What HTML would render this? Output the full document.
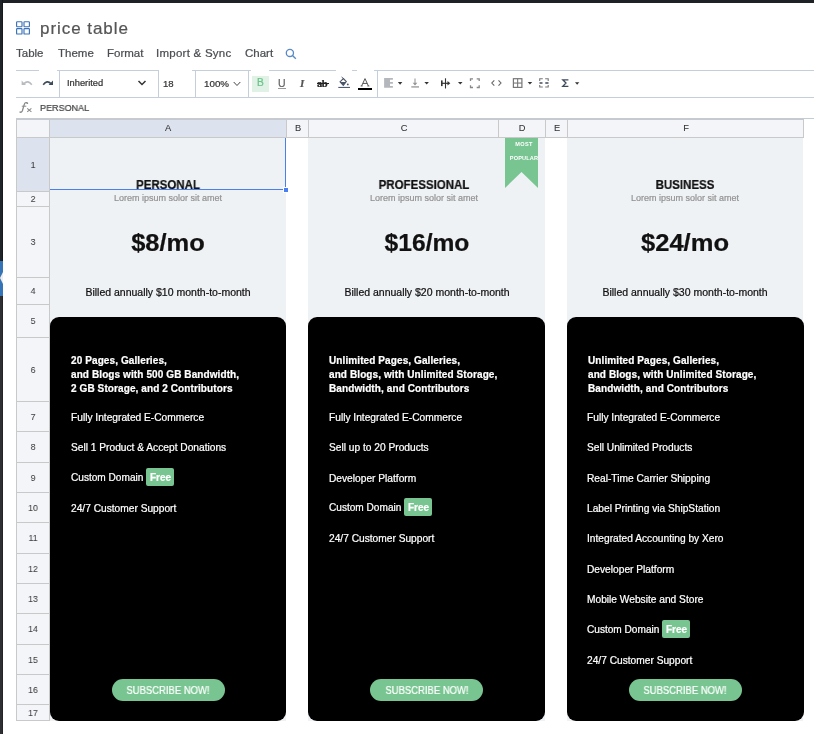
<!DOCTYPE html>
<html><head><meta charset="utf-8"><style>
*{box-sizing:border-box}
html,body{margin:0;padding:0}
body{width:814px;height:734px;overflow:hidden;background:#fff;position:relative;font-family:"Liberation Sans",sans-serif}
.a{position:absolute}
.t{position:absolute;white-space:nowrap;line-height:1;will-change:transform;-webkit-text-stroke:0.22px currentColor}
.card{position:absolute;background:#000;border-radius:9px}
.btn{position:absolute;background:#78c591;border-radius:11px}
</style></head><body>
<div class="a" style="left:0px;top:0px;width:814px;height:3px;background:#1e2226;"></div>
<div class="a" style="left:0px;top:0px;width:3px;height:261px;background:#1f2428;"></div>
<div class="a" style="left:0px;top:296px;width:3px;height:438px;background:#2d2f32;"></div>
<div class="a" style="left:2px;top:0px;width:1px;height:261px;background:#15191c;"></div>
<div class="a" style="left:2px;top:296px;width:1px;height:438px;background:#222426;"></div>
<div class="a" style="left:0px;top:261px;width:3px;height:35px;background:#3474b7;"></div>
<svg class="a" style="left:0;top:271px" width="3" height="14" viewBox="0 0 3 14"><path d="M3 1 L0 7 L3 13 Z" fill="#eee"/></svg>
<svg class="a" style="left:15px;top:20px" width="16" height="16" viewBox="0 0 16 16">
<rect x="1.6" y="1.7" width="5.4" height="5" rx="0.6" fill="none" stroke="#3a72b8" stroke-width="1.15"/>
<rect x="9" y="1.7" width="5.4" height="5" rx="0.6" fill="none" stroke="#3a72b8" stroke-width="1.15"/>
<rect x="1.6" y="8.6" width="5.4" height="5.4" rx="0.6" fill="none" stroke="#3a72b8" stroke-width="1.15"/>
<rect x="9" y="8.6" width="5.4" height="5.4" rx="0.6" fill="none" stroke="#3a72b8" stroke-width="1.15"/>
</svg>
<div class="t" style="left:40.30px;top:20.21px;font-size:17px;color:#555;font-weight:400;letter-spacing:0.95px">price table</div>
<div class="t" style="left:16.00px;top:47.87px;font-size:11.5px;color:#4a4d52;font-weight:400;letter-spacing:0px">Table</div>
<div class="t" style="left:58.00px;top:47.87px;font-size:11.5px;color:#4a4d52;font-weight:400;letter-spacing:0px">Theme</div>
<div class="t" style="left:106.50px;top:47.87px;font-size:11.5px;color:#4a4d52;font-weight:400;letter-spacing:0px">Format</div>
<div class="t" style="left:155.80px;top:47.87px;font-size:11.5px;color:#4a4d52;font-weight:400;letter-spacing:0.25px">Import &amp; Sync</div>
<div class="t" style="left:244.50px;top:47.87px;font-size:11.5px;color:#4a4d52;font-weight:400;letter-spacing:0px">Chart</div>
<svg class="a" style="left:285px;top:47.5px" width="12" height="12" viewBox="0 0 12 12"><circle cx="4.9" cy="4.9" r="3.6" fill="none" stroke="#5a8ac6" stroke-width="1.3"/><line x1="7.5" y1="7.5" x2="10.8" y2="10.8" stroke="#5a8ac6" stroke-width="1.4"/></svg>
<div class="a" style="left:16px;top:70px;width:23px;height:1px;background:#c5cfdc;"></div>
<div class="a" style="left:57px;top:70px;width:102px;height:1px;background:#c5cfdc;"></div>
<div class="a" style="left:192px;top:70px;width:59px;height:1px;background:#c5cfdc;"></div>
<div class="a" style="left:269px;top:70px;width:67px;height:1px;background:#c5cfdc;"></div>
<div class="a" style="left:352px;top:70px;width:5px;height:1px;background:#c5cfdc;"></div>
<div class="a" style="left:374px;top:70px;width:440px;height:1px;background:#c5cfdc;"></div>
<div class="a" style="left:16px;top:97px;width:798px;height:1px;background:#c5cfdc;"></div>
<div class="a" style="left:59px;top:70px;width:1px;height:28px;background:#c5cfdc;"></div>
<div class="a" style="left:158px;top:70px;width:1px;height:28px;background:#c5cfdc;"></div>
<div class="a" style="left:195px;top:70px;width:1px;height:28px;background:#c5cfdc;"></div>
<div class="a" style="left:248px;top:70px;width:1px;height:28px;background:#c5cfdc;"></div>
<div class="a" style="left:377px;top:70px;width:1px;height:28px;background:#c5cfdc;"></div>
<div class="t" style="left:67.00px;top:79.23px;font-size:9.3px;color:#333;font-weight:400;">Inherited</div>
<svg class="a" style="left:137px;top:79px" width="10" height="8" viewBox="0 0 10 8"><path d="M1.5 2 L5 5.5 L8.5 2" fill="none" stroke="#333" stroke-width="1.5"/></svg>
<div class="t" style="left:162.70px;top:79.47px;font-size:9.6px;color:#333;font-weight:400;">18</div>
<div class="t" style="left:204.00px;top:79.30px;font-size:9.8px;color:#333;font-weight:400;">100%</div>
<svg class="a" style="left:233px;top:81px" width="8" height="6" viewBox="0 0 8 6"><path d="M0.7 1 L4 4.5 L7.3 1" fill="none" stroke="#444" stroke-width="1"/></svg>
<svg class="a" style="left:20px;top:78px" width="14" height="10" viewBox="0 0 14 10"><path d="M4 5.6 Q8 1.6 11.8 6.8" fill="none" stroke="#b8bcc2" stroke-width="1.6"/><path d="M1.6 2.6 V7 H6 Z" fill="#b8bcc2"/></svg>
<svg class="a" style="left:42px;top:78px" width="14" height="10" viewBox="0 0 14 10"><path d="M1.2 6.8 Q5 1.6 9 5.6" fill="none" stroke="#3d4a5a" stroke-width="1.6"/><path d="M11 2.6 V7 H6.6 Z" fill="#3d4a5a"/></svg>
<div class="a" style="left:251.5px;top:75.5px;width:17.5px;height:16px;background:#dff2e5;"></div>
<div class="t" style="left:256.80px;top:78.17px;font-size:10.2px;color:#6cc38a;font-weight:400;">B</div>
<div class="t" style="left:277.50px;top:78.11px;font-size:10.5px;color:#666;font-weight:400;">U</div>
<div class="a" style="left:277.5px;top:88px;width:8px;height:1px;background:#999;"></div>
<div class="t" style="left:299.50px;top:78.09px;font-size:11px;color:#555;font-weight:700;font-style:italic;font-family:'Liberation Serif'">I</div>
<div class="t" style="left:317.00px;top:78.91px;font-size:10.5px;color:#222;font-weight:700;font-family:'Liberation Serif';letter-spacing:-0.5px">ab</div>
<div class="a" style="left:316.5px;top:83.3px;width:12px;height:0.9px;background:#222;"></div>
<svg class="a" style="left:337px;top:76px" width="14" height="14" viewBox="0 0 14 14"><path d="M3 5.8 L6.4 2.5 L9.3 5.6 L6.3 9.4 Z" fill="none" stroke="#4a5568" stroke-width="1.1"/><path d="M3.2 6 H9.1 L6.3 9.3 Z" fill="#4a5568"/><path d="M4.6 1 L6.4 2.6" stroke="#4a5568" stroke-width="1"/><circle cx="10.8" cy="8.4" r="0.95" fill="#4a5568"/><rect x="1.3" y="10.9" width="11.7" height="1.1" fill="#4d5b6e"/></svg>
<svg class="a" style="left:358px;top:76px" width="14" height="12" viewBox="0 0 14 12"><path d="M3.6 10 L7 2.6 L10.4 10 M4.9 7.4 H9.1" fill="none" stroke="#444" stroke-width="0.9"/><path d="M2.6 10 H4.6 M9.4 10 H11.4" stroke="#444" stroke-width="0.8"/></svg>
<div class="a" style="left:358px;top:88px;width:14px;height:2px;background:#000;"></div>
<svg class="a" style="left:382px;top:76px" width="200" height="14" viewBox="0 0 200 14"><path d="M2.1 1.9 H10.9 V3.7 H8 V5.9 H10.9 V7.8 H8 V10 H10.9 V11.8 H2.1 Z" fill="#b4b8bd"/><path d="M15.9 5.9 H20.3 L18.1 8.7Z" fill="#333"/><line x1="33" y1="2.5" x2="33" y2="9" stroke="#999" stroke-width="1.1"/><path d="M30.6 6.8 H35.4 L33 9.6 Z" fill="#999"/><rect x="29.3" y="10.1" width="7.7" height="1.6" fill="#aaa"/><path d="M42.4 6 H46.9 L44.65 8.5Z" fill="#333"/><rect x="59" y="4.4" width="1.6" height="5.7" fill="#333"/><line x1="63.5" y1="2.3" x2="63.5" y2="12.5" stroke="#333" stroke-width="1.1"/><path d="M59.5 7.3 H66" stroke="#333" stroke-width="1.2"/><path d="M65.5 5 L68.3 7.3 L65.5 9.6Z" fill="#333"/><path d="M76 6 H80.5 L78.25 8.5Z" fill="#333"/><path d="M88.5 5 V2.8 H91 M94.7 2.8 H97.2 V5 M97.2 9.3 V11.5 H94.7 M91 11.5 H88.5 V9.3" fill="none" stroke="#888" stroke-width="1.3"/><path d="M112.3 4.3 L109.8 7 L112.3 9.7 M116.5 4.3 L119 7 L116.5 9.7" fill="none" stroke="#666" stroke-width="1.1"/><rect x="131.4" y="2.7" width="8.5" height="8.7" fill="none" stroke="#777" stroke-width="1.2"/><line x1="135.65" y1="2.7" x2="135.65" y2="11.4" stroke="#777" stroke-width="1.1"/><line x1="131.4" y1="7.05" x2="139.9" y2="7.05" stroke="#777" stroke-width="1.1"/><path d="M145.7 6 H150.2 L147.95 8.5Z" fill="#333"/><path d="M157.7 5 V2.8 H160.8 M163.2 2.8 H166.2 V5 M157.7 9 V11 H160.8 M163.2 11 H166.2 V9" fill="none" stroke="#777" stroke-width="1.1"/><path d="M157.5 7 H160.5 M163.3 7 H166.5" stroke="#3d4a5c" stroke-width="1.5"/><path d="M186.4 3.8 H180.8 L184 7 L180.8 10.3 H186.4" fill="none" stroke="#3d4a5c" stroke-width="1.3"/><path d="M193 6.3 H197.3 L195.15 8.7Z" fill="#333"/></svg>
<svg class="a" style="left:18px;top:101px" width="16" height="13" viewBox="0 0 16 13"><path d="M1.6 10.6 C2.4 11.6 3.6 11.5 4.3 10 L6.3 3.4 C6.8 1.8 7.8 1.3 9 1.7" fill="none" stroke="#8a8a8a" stroke-width="1.3"/><circle cx="9.3" cy="2.2" r="0.9" fill="#8a8a8a"/><path d="M3.8 5.2 H8.3" stroke="#8a8a8a" stroke-width="1"/><path d="M9.2 7.4 L13.4 10.9 M13.4 7.4 L9.2 10.9" stroke="#8a8a8a" stroke-width="1.1"/></svg>
<div class="t" style="left:39.50px;top:103.37px;font-size:9.6px;color:#444;font-weight:400;transform:scaleX(0.94);transform-origin:0 0">PERSONAL</div>
<div class="a" style="left:16px;top:118px;width:798px;height:1px;background:#c3cbd6;"></div>
<div class="a" style="left:16px;top:119px;width:788px;height:1px;background:#c9c9c9;"></div>
<div class="a" style="left:17px;top:120px;width:786px;height:17px;background:#f4f5f9;"></div>
<div class="a" style="left:50px;top:120px;width:236px;height:17px;background:#dce3ef;"></div>
<div class="a" style="left:17px;top:138px;width:32px;height:582px;background:#f4f5f9;"></div>
<div class="a" style="left:17px;top:138px;width:32px;height:53px;background:#dce3ef;"></div>
<div class="a" style="left:49px;top:119px;width:1px;height:19px;background:#c9c9c9;"></div>
<div class="a" style="left:286px;top:119px;width:1px;height:19px;background:#c9c9c9;"></div>
<div class="a" style="left:308px;top:119px;width:1px;height:19px;background:#c9c9c9;"></div>
<div class="a" style="left:498px;top:119px;width:1px;height:19px;background:#c9c9c9;"></div>
<div class="a" style="left:545px;top:119px;width:1px;height:19px;background:#c9c9c9;"></div>
<div class="a" style="left:567px;top:119px;width:1px;height:19px;background:#c9c9c9;"></div>
<div class="a" style="left:803px;top:119px;width:1px;height:19px;background:#c9c9c9;"></div>
<div class="t" style="left:-32.00px;width:400px;text-align:center;top:124.33px;font-size:9.3px;color:#333;font-weight:400;-webkit-text-stroke:0.08px #333">A</div>
<div class="t" style="left:97.50px;width:400px;text-align:center;top:124.33px;font-size:9.3px;color:#333;font-weight:400;-webkit-text-stroke:0.08px #333">B</div>
<div class="t" style="left:203.50px;width:400px;text-align:center;top:124.33px;font-size:9.3px;color:#333;font-weight:400;-webkit-text-stroke:0.08px #333">C</div>
<div class="t" style="left:322.00px;width:400px;text-align:center;top:124.33px;font-size:9.3px;color:#333;font-weight:400;-webkit-text-stroke:0.08px #333">D</div>
<div class="t" style="left:356.50px;width:400px;text-align:center;top:124.33px;font-size:9.3px;color:#333;font-weight:400;-webkit-text-stroke:0.08px #333">E</div>
<div class="t" style="left:485.50px;width:400px;text-align:center;top:124.33px;font-size:9.3px;color:#333;font-weight:400;-webkit-text-stroke:0.08px #333">F</div>
<div class="a" style="left:16px;top:137px;width:788px;height:1px;background:#c9c9c9;"></div>
<div class="a" style="left:16px;top:119px;width:1px;height:602px;background:#c9c9c9;"></div>
<div class="a" style="left:49px;top:119px;width:1px;height:602px;background:#c9c9c9;"></div>
<div class="a" style="left:16px;top:191px;width:34px;height:1px;background:#c9c9c9;"></div>
<div class="t" style="left:-167.00px;width:400px;text-align:center;top:160.63px;font-size:9.3px;color:#3d3d3d;font-weight:400;transform:scaleX(0.92);-webkit-text-stroke:0.08px #3d3d3d">1</div>
<div class="a" style="left:16px;top:206px;width:34px;height:1px;background:#c9c9c9;"></div>
<div class="t" style="left:-167.00px;width:400px;text-align:center;top:195.13px;font-size:9.3px;color:#3d3d3d;font-weight:400;transform:scaleX(0.92);-webkit-text-stroke:0.08px #3d3d3d">2</div>
<div class="a" style="left:16px;top:277px;width:34px;height:1px;background:#c9c9c9;"></div>
<div class="t" style="left:-167.00px;width:400px;text-align:center;top:238.08px;font-size:9.3px;color:#3d3d3d;font-weight:400;transform:scaleX(0.92);-webkit-text-stroke:0.08px #3d3d3d">3</div>
<div class="a" style="left:16px;top:304px;width:34px;height:1px;background:#c9c9c9;"></div>
<div class="t" style="left:-167.00px;width:400px;text-align:center;top:287.18px;font-size:9.3px;color:#3d3d3d;font-weight:400;transform:scaleX(0.92);-webkit-text-stroke:0.08px #3d3d3d">4</div>
<div class="a" style="left:16px;top:337px;width:34px;height:1px;background:#c9c9c9;"></div>
<div class="t" style="left:-167.00px;width:400px;text-align:center;top:317.28px;font-size:9.3px;color:#3d3d3d;font-weight:400;transform:scaleX(0.92);-webkit-text-stroke:0.08px #3d3d3d">5</div>
<div class="a" style="left:16px;top:401px;width:34px;height:1px;background:#c9c9c9;"></div>
<div class="t" style="left:-167.00px;width:400px;text-align:center;top:365.73px;font-size:9.3px;color:#3d3d3d;font-weight:400;transform:scaleX(0.92);-webkit-text-stroke:0.08px #3d3d3d">6</div>
<div class="a" style="left:16px;top:431px;width:34px;height:1px;background:#c9c9c9;"></div>
<div class="t" style="left:-167.00px;width:400px;text-align:center;top:412.83px;font-size:9.3px;color:#3d3d3d;font-weight:400;transform:scaleX(0.92);-webkit-text-stroke:0.08px #3d3d3d">7</div>
<div class="a" style="left:16px;top:462px;width:34px;height:1px;background:#c9c9c9;"></div>
<div class="t" style="left:-167.00px;width:400px;text-align:center;top:443.38px;font-size:9.3px;color:#3d3d3d;font-weight:400;transform:scaleX(0.92);-webkit-text-stroke:0.08px #3d3d3d">8</div>
<div class="a" style="left:16px;top:492px;width:34px;height:1px;background:#c9c9c9;"></div>
<div class="t" style="left:-167.00px;width:400px;text-align:center;top:473.83px;font-size:9.3px;color:#3d3d3d;font-weight:400;transform:scaleX(0.92);-webkit-text-stroke:0.08px #3d3d3d">9</div>
<div class="a" style="left:16px;top:522px;width:34px;height:1px;background:#c9c9c9;"></div>
<div class="t" style="left:-167.00px;width:400px;text-align:center;top:503.73px;font-size:9.3px;color:#3d3d3d;font-weight:400;transform:scaleX(0.92);-webkit-text-stroke:0.08px #3d3d3d">10</div>
<div class="a" style="left:16px;top:553px;width:34px;height:1px;background:#c9c9c9;"></div>
<div class="t" style="left:-167.00px;width:400px;text-align:center;top:534.28px;font-size:9.3px;color:#3d3d3d;font-weight:400;transform:scaleX(0.92);-webkit-text-stroke:0.08px #3d3d3d">11</div>
<div class="a" style="left:16px;top:583px;width:34px;height:1px;background:#c9c9c9;"></div>
<div class="t" style="left:-167.00px;width:400px;text-align:center;top:564.73px;font-size:9.3px;color:#3d3d3d;font-weight:400;transform:scaleX(0.92);-webkit-text-stroke:0.08px #3d3d3d">12</div>
<div class="a" style="left:16px;top:613px;width:34px;height:1px;background:#c9c9c9;"></div>
<div class="t" style="left:-167.00px;width:400px;text-align:center;top:594.63px;font-size:9.3px;color:#3d3d3d;font-weight:400;transform:scaleX(0.92);-webkit-text-stroke:0.08px #3d3d3d">13</div>
<div class="a" style="left:16px;top:644px;width:34px;height:1px;background:#c9c9c9;"></div>
<div class="t" style="left:-167.00px;width:400px;text-align:center;top:625.28px;font-size:9.3px;color:#3d3d3d;font-weight:400;transform:scaleX(0.92);-webkit-text-stroke:0.08px #3d3d3d">14</div>
<div class="a" style="left:16px;top:674px;width:34px;height:1px;background:#c9c9c9;"></div>
<div class="t" style="left:-167.00px;width:400px;text-align:center;top:655.73px;font-size:9.3px;color:#3d3d3d;font-weight:400;transform:scaleX(0.92);-webkit-text-stroke:0.08px #3d3d3d">15</div>
<div class="a" style="left:16px;top:704px;width:34px;height:1px;background:#c9c9c9;"></div>
<div class="t" style="left:-167.00px;width:400px;text-align:center;top:685.63px;font-size:9.3px;color:#3d3d3d;font-weight:400;transform:scaleX(0.92);-webkit-text-stroke:0.08px #3d3d3d">16</div>
<div class="a" style="left:16px;top:720px;width:34px;height:1px;background:#c9c9c9;"></div>
<div class="t" style="left:-167.00px;width:400px;text-align:center;top:708.68px;font-size:9.3px;color:#3d3d3d;font-weight:400;transform:scaleX(0.92);-webkit-text-stroke:0.08px #3d3d3d">17</div>
<div class="a" style="left:50px;top:138px;width:236px;height:583px;background:#eff2f5;"></div>
<div class="a" style="left:308px;top:138px;width:237px;height:583px;background:#eff2f5;"></div>
<div class="a" style="left:567px;top:138px;width:236px;height:583px;background:#eff2f5;"></div>
<div class="a" style="left:285px;top:138px;width:1px;height:52px;background:#4a7ff0;"></div>
<div class="a" style="left:50px;top:189px;width:235px;height:1px;background:#4a7ff0;"></div>
<div class="a" style="left:284px;top:188px;width:4px;height:4px;background:#4a7ff0;outline:1px solid #fff"></div>
<svg class="a" style="left:505px;top:138px" width="33" height="50" viewBox="0 0 33 50"><path d="M0 0 H33 V50 L16.5 34 L0 50 Z" fill="#78c591"/></svg>
<div class="t" style="left:324.00px;width:400px;text-align:center;top:142.46px;font-size:5.6px;color:#fff;font-weight:700;letter-spacing:0.3px;-webkit-text-stroke:0">MOST</div>
<div class="t" style="left:323.90px;width:400px;text-align:center;top:156.46px;font-size:5.6px;color:#fff;font-weight:700;letter-spacing:0.15px;-webkit-text-stroke:0">POPULAR</div>
<div class="t" style="left:-31.60px;width:400px;text-align:center;top:177.97px;font-size:13.5px;color:#111;font-weight:700;transform:scaleX(0.852);">PERSONAL</div>
<div class="t" style="left:-31.60px;width:400px;text-align:center;top:193.98px;font-size:9px;color:#939393;font-weight:400;">Lorem ipsum solor sit amet</div>
<div class="t" style="left:-31.60px;width:400px;text-align:center;top:231.93px;font-size:23px;color:#111;font-weight:700;transform:scaleX(1.108);">$8/mo</div>
<div class="t" style="left:-31.60px;width:400px;text-align:center;top:286.61px;font-size:10.5px;color:#111;font-weight:400;">Billed annually $10 month-to-month</div>
<div class="card" style="left:50px;top:316.7px;width:236px;height:404px"></div>
<div class="t" style="left:71.00px;top:356.24px;font-size:10px;color:#fff;font-weight:700;letter-spacing:0.1px">20 Pages, Galleries,</div>
<div class="t" style="left:71.00px;top:370.09px;font-size:10px;color:#fff;font-weight:700;letter-spacing:0.1px">and Blogs with 500 GB Bandwidth,</div>
<div class="t" style="left:71.00px;top:383.94px;font-size:10px;color:#fff;font-weight:700;letter-spacing:0.1px">2 GB Storage, and 2 Contributors</div>
<div class="t" style="left:70.50px;top:412.97px;font-size:10.2px;color:#fff;font-weight:400;">Fully Integrated E-Commerce</div>
<div class="t" style="left:70.50px;top:442.97px;font-size:10.2px;color:#fff;font-weight:400;">Sell 1 Product &amp; Accept Donations</div>
<div class="t" style="left:70.50px;top:473.05px;font-size:10.1px;color:#fff;font-weight:400;">Custom Domain</div>
<div class="a" style="left:145.90px;top:468.20px;width:28px;height:18px;background:#78c591;border-radius:2px"></div>
<div class="t" style="left:149.50px;top:473.14px;font-size:10px;color:#fff;font-weight:700;">Free</div>
<div class="t" style="left:70.50px;top:503.97px;font-size:10.2px;color:#fff;font-weight:400;">24/7 Customer Support</div>
<div class="btn" style="left:111.50px;top:679px;width:113px;height:22px"></div>
<div class="t" style="left:-32.00px;width:400px;text-align:center;top:685.43px;font-size:10.6px;color:#fff;font-weight:400;transform:scaleX(0.895);">SUBSCRIBE NOW!</div>
<div class="t" style="left:223.90px;width:400px;text-align:center;top:177.97px;font-size:13.5px;color:#111;font-weight:700;transform:scaleX(0.852);">PROFESSIONAL</div>
<div class="t" style="left:223.90px;width:400px;text-align:center;top:193.98px;font-size:9px;color:#939393;font-weight:400;">Lorem ipsum solor sit amet</div>
<div class="t" style="left:226.90px;width:400px;text-align:center;top:231.93px;font-size:23px;color:#111;font-weight:700;transform:scaleX(1.07);">$16/mo</div>
<div class="t" style="left:226.90px;width:400px;text-align:center;top:286.61px;font-size:10.5px;color:#111;font-weight:400;">Billed annually $20 month-to-month</div>
<div class="card" style="left:308px;top:316.7px;width:237px;height:404px"></div>
<div class="t" style="left:329.10px;top:356.24px;font-size:10px;color:#fff;font-weight:700;letter-spacing:0.1px">Unlimited Pages, Galleries,</div>
<div class="t" style="left:329.10px;top:370.09px;font-size:10px;color:#fff;font-weight:700;letter-spacing:0.1px">and Blogs, with Unlimited Storage,</div>
<div class="t" style="left:329.10px;top:383.94px;font-size:10px;color:#fff;font-weight:700;letter-spacing:0.1px">Bandwidth, and Contributors</div>
<div class="t" style="left:328.60px;top:412.97px;font-size:10.2px;color:#fff;font-weight:400;">Fully Integrated E-Commerce</div>
<div class="t" style="left:328.60px;top:442.97px;font-size:10.2px;color:#fff;font-weight:400;">Sell up to 20 Products</div>
<div class="t" style="left:328.60px;top:473.97px;font-size:10.2px;color:#fff;font-weight:400;">Developer Platform</div>
<div class="t" style="left:328.60px;top:502.85px;font-size:10.1px;color:#fff;font-weight:400;">Custom Domain</div>
<div class="a" style="left:404.00px;top:498.00px;width:28px;height:18px;background:#78c591;border-radius:2px"></div>
<div class="t" style="left:407.60px;top:502.94px;font-size:10px;color:#fff;font-weight:700;">Free</div>
<div class="t" style="left:328.60px;top:533.67px;font-size:10.2px;color:#fff;font-weight:400;">24/7 Customer Support</div>
<div class="btn" style="left:370.00px;top:679px;width:113px;height:22px"></div>
<div class="t" style="left:226.50px;width:400px;text-align:center;top:685.43px;font-size:10.6px;color:#fff;font-weight:400;transform:scaleX(0.895);">SUBSCRIBE NOW!</div>
<div class="t" style="left:485.30px;width:400px;text-align:center;top:177.97px;font-size:13.5px;color:#111;font-weight:700;transform:scaleX(0.852);">BUSINESS</div>
<div class="t" style="left:485.30px;width:400px;text-align:center;top:193.98px;font-size:9px;color:#939393;font-weight:400;">Lorem ipsum solor sit amet</div>
<div class="t" style="left:485.30px;width:400px;text-align:center;top:231.93px;font-size:23px;color:#111;font-weight:700;transform:scaleX(1.11);">$24/mo</div>
<div class="t" style="left:485.30px;width:400px;text-align:center;top:286.61px;font-size:10.5px;color:#111;font-weight:400;">Billed annually $30 month-to-month</div>
<div class="card" style="left:567px;top:316.7px;width:236.5px;height:404px"></div>
<div class="t" style="left:587.50px;top:356.24px;font-size:10px;color:#fff;font-weight:700;letter-spacing:0.1px">Unlimited Pages, Galleries,</div>
<div class="t" style="left:587.50px;top:370.09px;font-size:10px;color:#fff;font-weight:700;letter-spacing:0.1px">and Blogs, with Unlimited Storage,</div>
<div class="t" style="left:587.50px;top:383.94px;font-size:10px;color:#fff;font-weight:700;letter-spacing:0.1px">Bandwidth, and Contributors</div>
<div class="t" style="left:587.00px;top:412.97px;font-size:10.2px;color:#fff;font-weight:400;">Fully Integrated E-Commerce</div>
<div class="t" style="left:587.00px;top:442.97px;font-size:10.2px;color:#fff;font-weight:400;">Sell Unlimited Products</div>
<div class="t" style="left:587.00px;top:473.97px;font-size:10.2px;color:#fff;font-weight:400;">Real-Time Carrier Shipping</div>
<div class="t" style="left:587.00px;top:503.97px;font-size:10.2px;color:#fff;font-weight:400;">Label Printing via ShipStation</div>
<div class="t" style="left:587.00px;top:533.67px;font-size:10.2px;color:#fff;font-weight:400;">Integrated Accounting by Xero</div>
<div class="t" style="left:587.00px;top:565.47px;font-size:10.2px;color:#fff;font-weight:400;">Developer Platform</div>
<div class="t" style="left:587.00px;top:594.77px;font-size:10.2px;color:#fff;font-weight:400;">Mobile Website and Store</div>
<div class="t" style="left:587.00px;top:624.95px;font-size:10.1px;color:#fff;font-weight:400;">Custom Domain</div>
<div class="a" style="left:662.40px;top:620.10px;width:28px;height:18px;background:#78c591;border-radius:2px"></div>
<div class="t" style="left:666.00px;top:625.03px;font-size:10px;color:#fff;font-weight:700;">Free</div>
<div class="t" style="left:587.00px;top:655.77px;font-size:10.2px;color:#fff;font-weight:400;">24/7 Customer Support</div>
<div class="btn" style="left:628.75px;top:679px;width:113px;height:22px"></div>
<div class="t" style="left:485.25px;width:400px;text-align:center;top:685.43px;font-size:10.6px;color:#fff;font-weight:400;transform:scaleX(0.895);">SUBSCRIBE NOW!</div>
</body></html>
